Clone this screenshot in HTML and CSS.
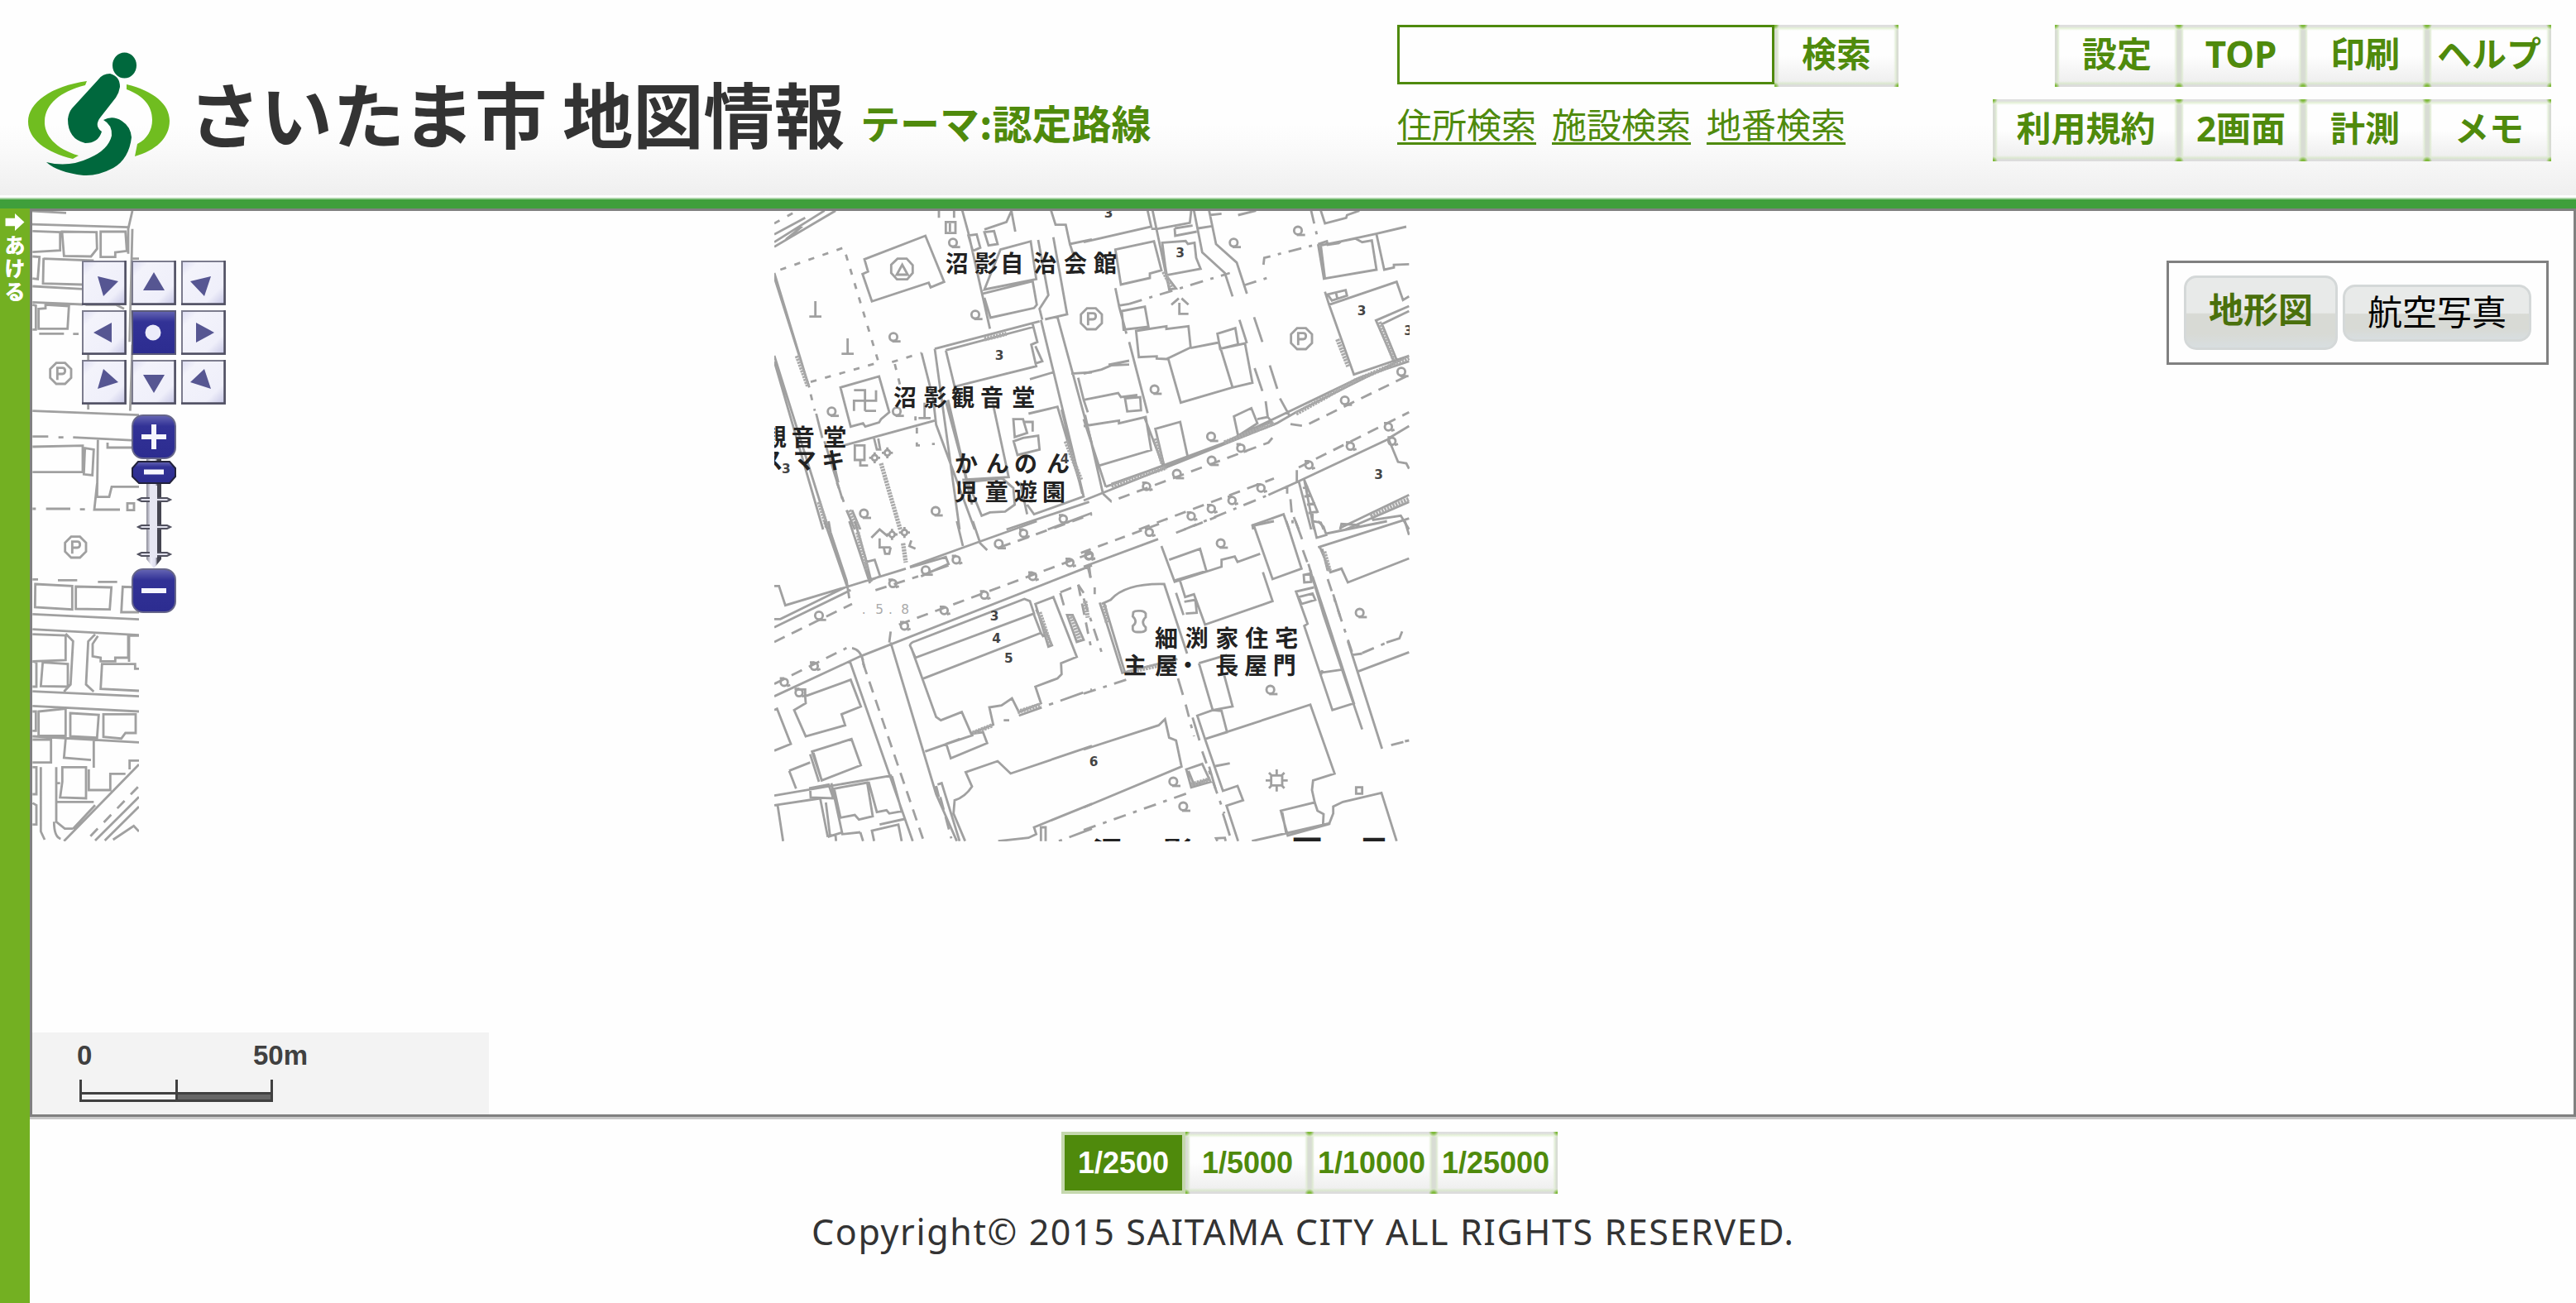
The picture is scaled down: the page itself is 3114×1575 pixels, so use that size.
FILE: index.html
```html
<!DOCTYPE html>
<html lang="ja">
<head>
<meta charset="utf-8">
<title>さいたま市 地図情報</title>
<link rel="stylesheet" href="styles.css">
</head>
<body>
<svg class="defs" width="0" height="0">
  <defs>
    <g id="tree"><circle r="14"/><path d="M-4 16H26"/></g>
    <g id="post"><circle r="13"/><path d="M-16 -14H0M10 14L22 10"/></g>
    <g id="parking"><path d="M-16 -38H16L38 -16V16L16 38H-16L-38 16V-16ZM-12 24V-20H6Q16 -20 16 -9Q16 2 6 2H-12"/></g>
    <g id="grave"><path d="M0 -28V28M-22 28H22"/></g>
    <g id="flower"><circle r="10"/><path d="M0 -20V-10M0 10V20M-20 0H-10M10 0H20"/></g>
  </defs>
</svg>
<header class="header">
  <svg class="logo" viewBox="0 0 1040 240">
    <path fill="#70bd20" d="M105 98C62 104 34 124 34 147C34 168 55 184 88 192L95 188C67 180 53 163 54 146C55 126 72 111 103 103ZM153 102C186 110 205 126 205 146C205 167 188 182 163 189L166 174C178 168 184 157 184 145C184 128 174 116 153 108Z"/>
    <g fill="#00683d">
      <ellipse cx="150.500" cy="79" rx="14.500" ry="15.500"/>
      <path d="M119 96Q124 89 133 89Q145 92 145 105Q144 112 140 118L122 141Q113 152 123 159Q119 173 103 173Q82 168 82 144Q83 136 87 131Z"/>
      <path d="M125 145Q136 139 147 146Q158 153 159 166Q156 192 137 203Q118 213 101 212Q69 208 56 196Q83 203 108 191Q131 181 135 164Q136 151 125 145Z"/>
    </g>
    <g class="logo-text">
      <text x="228" y="173" textLength="433" lengthAdjust="spacingAndGlyphs">さいたま市</text>
      <text x="680" y="173" textLength="341" lengthAdjust="spacingAndGlyphs">地図情報</text>
    </g>
  </svg>
  <h1 class="theme">テーマ:認定路線</h1>
  <div class="search">
    <form class="search-form"><input class="search-input" type="text"><button class="btn" type="button">検索</button></form>
    <div class="search-links"><a href="#">住所検索</a><a href="#">施設検索</a><a href="#">地番検索</a></div>
  </div>
  <nav class="nav">
    <div class="nav-row"><button class="btn">設定</button><button class="btn top">TOP</button><button class="btn">印刷</button><button class="btn">ヘルプ</button></div>
    <div class="nav-row"><button class="btn wide">利用規約</button><button class="btn">2画面</button><button class="btn">計測</button><button class="btn">メモ</button></div>
  </nav>
</header>
<div class="body">
  <aside class="side">
    <svg class="side-arrow" viewBox="0 0 24 22"><path d="M0 6H12V0L24 11L12 22V16H0Z" fill="#fff"/></svg>
    <span>あ</span><span>け</span><span>る</span>
  </aside>
  <main class="main">
    <div class="map">
      <svg class="tile tile-west" viewBox="39 255 129 762">
        <g transform="translate(0 240) scale(.33333)">
          <path d="M110 45L240 52M110 93L465 104M480 45L465 110V200M118 118L218 122V188L118 194M225 120L232 208L330 210L352 182L350 122ZM365 120H455L460 190L418 195V212H365ZM118 210L143 212L137 292L118 290M158 215L156 308L300 312M158 218L340 225M118 318L300 328M118 376L300 384M480 218H510M118 385L130 388V475H118M140 400L165 398V385L250 390L245 472H140ZM310 385H420L450 400M142 490H232M265 491H285M320 560V600M320 740V765M480 110L470 520M480 530L472 770M118 770L504 785M118 863H175M212 866H230M265 866L504 878M118 900L300 896V992H118M308 905L340 910L335 1003L304 1000ZM355 875L352 1082H396L405 1045H504M390 885V903H504M352 1035L342 1128H435M462 1105H486V1130H462ZM118 1125H130M167 1125H255M290 1127H308M118 1381H138M210 1384H280M355 1390H425M128 1398L262 1405V1490L127 1482ZM275 1407L404 1410L398 1490L275 1488ZM504 1410L445 1408L440 1500H504M118 1507L504 1526"/>
          <use href="#parking" x="220" y="634"/><use href="#parking" x="274" y="1264"/>
        </g>
        <g transform="translate(0 700) scale(.33333)">
          <path d="M118 182L504 203M118 200L238 204V294L118 298M238 198L265 225L256 382L232 408M345 200L320 226L312 382L340 408M355 206L336 235V280L365 285V298H418V285H465V205H504M468 206V300M504 325H490V308H370L365 398L504 405M118 298L132 302V390H118M155 302L246 308V390L148 388ZM118 407L504 425M118 460L504 480M118 480H130V550H118M140 480L238 470V568H140ZM255 486L358 492L352 575L255 570ZM375 490L492 490V558H455L440 578L375 572ZM118 570L504 592M118 582H185V665H118M238 580L232 648L330 656M340 585V684M226 682H312V795L218 792L226 735ZM322 690V765H400V706H455M470 690V658H504M504 672L232 950M118 682H132V780H118M148 682V915L162 945M204 682V740H218M204 740V880L235 905H265M205 808H340M118 812L132 820V890H118M196 880Q196 935 220 942M265 905L345 820M345 948L504 790M380 948L504 825M410 945L485 895L504 915"/>
          <path stroke-dasharray="38 32" d="M328 932L504 750"/>
        </g>
      </svg>
      <svg class="tile tile-center" viewBox="936 255 768 762">
        <g transform="translate(930 250) scale(.33333)">
          <path d="M18 145L240 14M18 128L200 14M18 100L130 40M60 118L120 70M345 190L566 105L634 272L585 292L578 275L372 343L338 244L358 235ZM18 240L140 640M18 255L145 655M18 540L215 1170M18 560L195 1170M170 750L192 838M258 655L398 615L435 745L405 770L398 782L348 797L340 785L295 797ZM700 14L722 95L800 442M722 104L752 100L765 148L738 160ZM780 92L815 88L828 135L795 140ZM780 82L860 55L878 15L892 90M838 155L948 125L968 262L780 300ZM775 315L955 270L970 355L960 367L802 402L780 330M975 120L1012 320L980 370L990 410M1030 110L1080 390L1000 408M1022 14L1038 65H1075L1090 135L1170 118M1090 135L1110 195M600 515L980 415M640 520L960 435M600 515L690 1170M640 520L672 652L968 578L950 500L972 490L955 425M985 410L1140 1050M1045 400L1170 860M965 505L990 560L965 568M672 652L860 605M945 625L1030 600M1095 605L1170 600M552 530L585 660M590 660L605 790L745 1170M640 705L700 930L735 1080M648 700L715 985L770 1120L800 1108L855 1105L890 1080L885 1020L845 985L700 1000M260 868L600 775M810 710L868 980L700 990M885 770H920L935 820L890 835ZM940 750L1045 725L1140 1050L960 1115L935 1080M886 850L920 838L975 830L980 880L900 900ZM925 780H955V815M1060 735L1135 1040M910 1000L935 1115M860 1170L1160 1070M1010 1170L1170 1110M1120 620L1140 700L1155 745M200 850L265 1060M225 890L250 1000M280 1100L310 1170M300 1100L330 1170M310 865H345V918H310ZM330 918V938H358M380 840L390 880H402L395 840M600 860H590M640 55H675V95H640ZM655 60V90M615 14V40M670 14V40M530 760V775"/>
          <path stroke-dasharray="22 32" d="M40 228L270 148L395 560M150 635L395 565M445 563L552 530M455 570L475 650M150 680L165 740M535 800V865H560M245 1000L270 1070M18 60L90 20"/>
          <path class="hatch" d="M405 930L475 1170M180 1070L210 1165M290 1100L325 1170M100 540L140 650M780 480L860 460M1075 850L1130 990"/>
          <path d="M442 210L465 188H498L520 212V240L500 263H463L442 240ZM482 210L462 246H502ZM307 665H347V740M347 703H307V740M347 665V703H387V665M347 740H387"/>
          <use href="#grave" x="167" y="370"/><use href="#grave" x="284" y="505"/><use href="#grave" x="563" y="738"/>
          <use href="#tree" x="666" y="130"/><use href="#tree" x="747" y="391"/><use href="#tree" x="450" y="472"/><use href="#tree" x="226" y="742"/><use href="#tree" x="462" y="742"/><use href="#tree" x="343" y="1112"/><use href="#tree" x="603" y="1103"/><use href="#post" x="1066" y="1132"/>
          <use href="#flower" x="382" y="910"/><use href="#flower" x="428" y="892"/>
        </g>
        <g transform="translate(1310 250) scale(.33333)">
          <path d="M0 128L245 72L232 14M250 14L310 298M245 80H268L385 58L390 14M400 14L430 165L512 240L540 325M455 14L480 135L555 202L592 315M330 78L332 105L410 90M330 78L395 68M415 78L465 70M455 30L500 25M560 30L625 14M285 130L370 124L378 135L402 130L408 185L424 225L300 248ZM115 155L255 125L282 230L240 242V258L135 282ZM285 150L310 300L335 296L300 250M115 295L128 358L165 352M138 378L222 362L235 435L145 445ZM128 360L155 460M165 490L232 748M190 450L300 433V443L380 433L388 510L300 552L265 550V542L200 545ZM305 545L352 710L540 655L490 492L388 512M485 460L550 440L560 498L495 515ZM495 515L585 495L612 638L540 655M0 605L65 590L100 575L165 572M90 573L165 558M0 700L125 675L135 690L195 682M150 695L205 690L208 738L158 742ZM0 795L128 775V785L225 762L245 882L50 940M0 770L80 1015M5 755L70 1040M260 805L350 780L378 910L292 940ZM220 762L290 945M545 760L608 730L630 785L560 830ZM630 770L668 762L685 785M660 705L668 765M712 695L745 755M565 410L592 495M618 400L648 490M620 585L648 668M675 575L702 660M860 14L875 60L952 40L955 30L1000 14M850 135L882 125L885 138L925 132L935 125L1060 98L1170 72M860 140L985 115L1010 128L1045 122L1062 228L875 260ZM1062 100L1090 228L1125 220V210L1180 208M875 308L890 355L980 608L1180 540M890 355L1135 272L1158 338L1180 325M885 318L950 302L955 322L900 340ZM915 312L920 332M1180 360L1060 412L1125 560M1180 378L1082 425L1135 555M850 135L872 265M0 1065L700 785L770 745L1180 540M80 1015L540 845L680 780M100 1005L300 935M510 855L1000 620L1180 560M770 1000L1110 840M670 1045L770 1000M1105 840L1180 795M1105 840L1140 925L1170 930L1180 950M800 990L835 1170M780 995L825 1170M795 1020L815 1015M800 1050L825 1045M810 1080L840 1075M815 1110L850 1105M800 990L850 1110M830 1110V1140L860 1145L870 1170M930 1165L1180 1045M950 1170L1180 1070M1040 1110L1050 1135L1150 1120L1180 1170M773 955V995M738 1010V1040M615 1170L612 1155L725 1115L745 1170M762 1125L780 1170"/>
          <path stroke-dasharray="48 28 12 28" d="M165 352L530 240M580 285L690 250M652 210L655 185L850 135M825 14L850 120M365 1170L670 1045M750 1060L760 1170"/>
          <path stroke-dasharray="42 28" d="M70 1040L100 1068L670 855L695 825M750 788L800 795L1180 610M200 1170L690 985M780 945L1180 745"/>
          <path class="hatch" d="M100 1012L300 945M510 855L690 785M770 750L985 630L1180 548M920 480L960 580M1072 418L1125 555M1040 1120L1180 1060M260 840L285 930M290 235L320 295"/>
          <path d="M318 355L345 332M355 332L380 355M347 348V388H380"/>
          <use href="#parking" x="28" y="406"/><use href="#parking" x="790" y="478"/>
          <use href="#tree" x="544" y="130"/><use href="#tree" x="777" y="86"/><use href="#tree" x="257" y="662"/><use href="#tree" x="462" y="833"/><use href="#post" x="570" y="875"/><use href="#tree" x="464" y="920"/><use href="#tree" x="338" y="968"/><use href="#post" x="228" y="1014"/><use href="#tree" x="947" y="702"/><use href="#tree" x="1152" y="598"/><use href="#post" x="1105" y="798"/><use href="#post" x="967" y="868"/><use href="#post" x="817" y="936"/><use href="#post" x="643" y="1020"/><use href="#post" x="538" y="1065"/><use href="#post" x="463" y="1095"/><use href="#post" x="390" y="1122"/><use href="#post" x="1118" y="850"/>
        </g>
        <g transform="translate(930 630) scale(.33333)">
          <path d="M200 0L285 245M215 0L222 40L280 215L290 280M290 0L365 225M310 0L348 130L370 220M350 148L382 140L402 200L365 215ZM18 235H35L58 305L275 240M18 355H40L275 240L495 172M18 385L295 250M510 165L760 75L970 0M680 0L702 90M738 0L765 80L790 105M510 168L640 130L650 155L550 200M580 185L650 160M18 635L330 490L1170 160M300 460Q330 465 340 505M440 400L435 440M292 508L520 1160M335 490L345 530M440 440L605 990L680 1160M565 835L642 808M18 685L28 680L78 808L18 832M130 635L295 575L332 672L262 700L275 740L132 780L90 685L132 660ZM92 610H130V632M155 835L298 790L332 885L190 940ZM72 905L148 875M72 905L97 970M148 845L180 945M160 840L190 940M18 995L445 922M18 1030L185 1005M30 1030L50 1160M148 968L215 955L232 1005L150 1002ZM185 1008L212 1145M225 950L265 1135L330 1128M235 970L355 948L375 1070L325 1082L310 1065L258 1075ZM360 945L390 1055L425 1048L435 1060L480 1052L445 925M205 1020L220 1140L240 1138L242 1160M330 1128L340 1160M212 1145L260 1130M380 1160L372 1122L468 1100L480 1160M400 1100L490 1080M510 450Q512 440 530 435L925 282L945 290L960 335L530 495ZM515 460L605 710L622 722L698 692L732 770L812 738L798 675L842 668L880 642L905 692L985 660L965 600L1045 570L1060 555L1058 515L1115 492L1030 275L965 300L1012 455L1025 450L968 320M960 340L985 405L555 572M985 405L995 420M740 770L775 765L790 805L658 860L642 808L740 775M1055 260L1068 305M1055 258L1095 242M1080 340H1100L1140 430L1115 438ZM1155 165L1165 205M1120 230L1140 260M1170 815L875 915L828 870L712 910L735 962Q710 1000 672 1012L668 1060L710 1160M610 955L625 950L690 1160M605 960L615 1000M1170 1025L960 1110L968 1135L940 1148L830 1160M985 1160V1110H1002V1160M640 808L690 790"/>
          <path stroke-dasharray="42 28" d="M18 438L300 300M18 590L280 460M385 250L540 200M470 375L1170 115M835 95L1170 -25M340 515L560 1160M1120 230L1165 450"/>
          <path stroke-dasharray="88 28 16 28" d="M905 705L1170 610M1170 1115L1050 1160M850 722H870"/>
          <path stroke-dasharray="48 26" d="M620 1000L660 1150"/>
          <path class="hatch" d="M485 80L495 150M738 768L810 740M900 692L985 665M1095 345L1125 430M980 330L1020 450M320 40L355 180"/>
          <path d="M370 60L400 30L430 55M400 62V95H440M415 95L420 118H435L440 95M515 70L508 90L530 100"/>
          <use href="#flower" x="445" y="48"/><use href="#flower" x="490" y="41"/>
          <use href="#tree" x="180" y="342"/><use href="#post" x="448" y="226"/><use href="#tree" x="832" y="82"/><use href="#post" x="922" y="44"/><use href="#post" x="678" y="140"/><use href="#tree" x="567" y="178"/><use href="#post" x="490" y="380"/><use href="#post" x="634" y="324"/><use href="#post" x="780" y="268"/><use href="#post" x="955" y="200"/><use href="#post" x="1090" y="150"/><use href="#post" x="1158" y="126"/><use href="#post" x="54" y="584"/><use href="#post" x="163" y="526"/><use href="#post" x="108" y="622"/>
        </g>
        <g transform="translate(1310 630) scale(.33333)">
          <path d="M0 165L270 65M282 90L330 220L500 165V140L548 128L558 148L640 118M310 140L422 100L445 180L330 215M620 15L690 0M615 10L685 210L790 172L735 0M768 0L792 65M650 185L685 290L440 375L400 265L368 275L350 218M65 300L98 285Q150 225 292 228L375 480M75 300L150 550M58 295L85 375L140 550L340 500M335 260L362 340M365 292L405 285L410 332L370 335M342 570L360 630M395 712L420 795M418 515L520 485M418 515L468 685L540 672L510 560M468 685L500 688L520 765L440 790L412 705L468 685M440 790L822 665L910 915L832 940L828 975L838 1020L715 1050L740 1140L890 1098L905 1060V1035L940 1018L1080 985L1135 1160M440 790L505 978L558 960L578 1012L518 1032L560 1160M478 888L530 878M838 1020L848 1050L870 1062L868 1100M720 1055L735 1135M610 1160L895 1095M0 828L272 740L295 718L310 785L335 795L355 890L0 1038M372 900L430 880L460 945L390 965ZM455 890L478 970M380 905L400 955L455 935M505 1060L530 1140M830 0L845 60L880 50L870 20L850 0M880 45L1100 0M850 95L1180 -10M855 90L895 185L935 172L958 222L1180 135M865 100L885 180M1165 0L1180 50M930 30L935 10L1000 14M815 155L870 340L1010 755M830 200L880 350L980 660L902 685L800 380L812 372L770 255L835 240M798 195L822 190L825 220L800 222ZM780 275L830 262L840 285L790 300ZM855 550L938 538M860 560L865 540M905 265L930 345M958 435L1082 825M995 545L1180 475M975 485L1010 480M1098 440L1145 425L1155 400M988 965H1010V988H988ZM1180 795L1165 798M485 1160L480 1150L512 1148L515 1160M20 165L25 205M180 330Q185 325 198 325H205Q220 325 225 335V348Q205 365 225 385V395Q220 402 205 402H195Q180 402 178 392V380Q198 365 178 345Z"/>
          <path stroke-dasharray="46 28 14 28" d="M0 625L170 570M370 665L400 780M430 835L510 1060M0 1120L380 985M795 105L830 200M885 210L975 480M1010 478L1100 440M1115 812L1180 795M0 280L70 490M40 240V265"/>
          <path stroke-dasharray="38 28" d="M-10 115L300 0M335 42L480 -15"/>
          <path class="hatch" d="M160 548L335 508M75 305L85 370M390 955L460 935M872 110L892 180M5 290L15 350"/>
          <path d="M680 922H720V958H680ZM700 900V918M700 960V980M660 940H678M722 940H740M672 912L680 920M728 912L720 920M672 968L680 960M728 968L720 960"/>
          <use href="#tree" x="497" y="80"/><use href="#tree" x="1001" y="332"/><use href="#tree" x="677" y="611"/><use href="#tree" x="325" y="944"/><use href="#tree" x="361" y="1034"/><use href="#post" x="238" y="40"/><use href="#post" x="20" y="124"/>
        </g>
        <g class="map-label" transform="translate(930 250) scale(.33333)">
          <text y="237" x="638 744 838 958 1068 1176">沼影自治会館</text>
          <text y="723" x="450 560 660 765 880">沼影観音堂</text>
          <text y="866" x="-22 80 196">観音堂</text>
          <text y="952" x="-34 86 190">スマキ</text>
          <text y="964" x="672 785 888 1005">かんのん</text>
          <text y="1066" x="672 782 888 990">児童遊園</text>
          <text y="1596" x="1398 1508 1618 1726 1834">細渕家住宅</text>
          <text y="1696" x="1284 1398 1476 1618 1722 1826">主屋・長屋門</text>
          <text y="2382 2382 2374 2377" x="1170 1425 1895 2138" class="district">沼影丁目</text>
        </g>
        <g class="map-num" transform="translate(930 250) scale(.33333)">
          <text x="818" y="554">3</text><text x="1214" y="38">3</text><text x="1474" y="184">3</text><text x="2132" y="392">3</text><text x="2302" y="464">3</text><text x="2194" y="986">3</text><text x="45" y="966">3</text><text x="1055" y="930">4</text><text x="800" y="1500">3</text><text x="808" y="1580">4</text><text x="852" y="1652">5</text><text x="1160" y="2028">6</text>
          <text class="faint" x="335 385 432 478" y="1476">.5.8</text>
        </g>
      </svg>
      <svg class="control" viewBox="99 315 174 426">
        <defs>
          <linearGradient id="face" x2="1" y2="1"><stop offset="0" stop-color="#dcdcf2"/><stop offset=".2" stop-color="#f3f3fb"/><stop offset=".75" stop-color="#efeffa"/><stop offset="1" stop-color="#c4c4e4"/></linearGradient>
          <linearGradient id="navy" x2="0" y2="1"><stop offset="0" stop-color="#6666b4"/><stop offset=".25" stop-color="#323296"/><stop offset="1" stop-color="#2c2c90"/></linearGradient>
          <linearGradient id="rail"><stop offset="0" stop-color="#8a8a96"/><stop offset=".3" stop-color="#eeeefa"/><stop offset=".6" stop-color="#dcdcec"/><stop offset=".75" stop-color="#444450"/><stop offset="1" stop-color="#444450"/></linearGradient>
          <g id="key"><rect x="1" y="1" width="52" height="52" fill="url(#face)" stroke="#7c7c8e" stroke-width="2"/><path d="M52.500 0V52.500H0" fill="none" stroke="#515164" stroke-width="2.500"/></g>
        </defs>
        <use href="#key" x="99" y="315"/><use href="#key" x="159" y="315"/><use href="#key" x="219" y="315"/>
        <use href="#key" x="99" y="375"/><use href="#key" x="219" y="375"/>
        <use href="#key" x="99" y="435"/><use href="#key" x="159" y="435"/><use href="#key" x="219" y="435"/>
        <rect x="160" y="376" width="52" height="52" fill="url(#navy)" stroke="#5a5a78" stroke-width="2"/>
        <circle cx="185" cy="402" r="9.500" fill="#ececfa"/>
        <path fill="#565692" d="M118 334L143 340L125 358ZM186 329L199 351H173ZM255 334L230 340L247 358ZM113 402L135 390V414ZM259 402L237 390V414ZM125 446L143 462L118 470ZM186 475L199 453H173ZM247 446L230 462L255 470Z"/>
        <path fill="url(#rail)" d="M177 550H195V676L186 687L177 676Z"/>
        <path fill="#e0e0ec" stroke="#50505e" stroke-width="2" d="M167 604L171 602H202L206 604L202 606H171ZM167 637L171 635H202L206 637L202 639H171ZM167 670L171 668H202L206 670L202 672H171Z"/>
        <path fill="#e6e6f2" d="M181 587H190V674H181Z"/>
        <rect x="160" y="502" width="52" height="52" rx="13" fill="url(#navy)" stroke="#66668a" stroke-width="2"/>
        <path d="M167 558H205L212 566V576L205 584H168L160 576V566Z" fill="url(#navy)" stroke="#22223c" stroke-width="2"/>
        <rect x="160" y="688" width="52" height="52" rx="13" fill="url(#navy)" stroke="#66668a" stroke-width="2"/>
        <path d="M171 528H201M186 513V543M174 570.500H198M171 714H201" stroke="#f6f6fe" stroke-width="6"/>
      </svg>
      <div class="layers"><button class="layer active">地形図</button><button class="layer">航空写真</button></div>
      <div class="scale">
        <div class="scale-labels"><span>0</span><span>50m</span></div>
        <svg class="scale-bar" viewBox="0 0 234 27"><path d="M117 16H233V26H117Z" fill="#666"/><path d="M1.500 0V25.500H232.500V0M117.500 0V25M0 16.500H233" fill="none" stroke="#404040" stroke-width="3"/></svg>
      </div>
    </div>
    <div class="scales"><button class="btn on">1/2500</button><button class="btn">1/5000</button><button class="btn">1/10000</button><button class="btn">1/25000</button></div>
    <footer class="copy">Copyright© 2015 SAITAMA CITY ALL RIGHTS RESERVED.</footer>
  </main>
</div>
</body>
</html>
```
FILE: styles.css
```css
* { box-sizing: border-box; }
body {
  margin: 0;
  width: 3114px;
  height: 1575px;
  overflow: hidden;
  background: #fefefe;
  color: #333;
  font-family: "Noto Sans", "Noto Sans CJK JP", sans-serif;
}
.defs { display: block; height: 0; }
button { font: inherit; padding: 0; margin: 0; border: 0; }

.header {
  display: flex;
  height: 252px;
  background: linear-gradient(#fefefe 0 150px, #fafafa 180px, #efefef 236px, #fefefe 236px 239px, #a5d2a2 239px 241px, #3f9f3b 241px);
}
.logo { width: 1040px; height: 240px; flex: none; }
.logo-text {
  fill: #333;
  font: bold 86px "Noto Sans CJK JP", sans-serif;
}
.theme {
  margin: 111px 0 0;
  width: 649px;
  flex: none;
  color: #4f8a0c;
  font: bold 48px/72px "Noto Sans CJK JP", sans-serif;
}
.search { width: 606px; flex: none; padding-top: 30px; }
.search-form { display: flex; align-items: flex-start; margin: 0; }
.search-input {
  width: 457px;
  height: 72px;
  padding: 0;
  border: 3px solid #4f8a0c;
  background: #fefefe;
}
.search-links { display: flex; gap: 19px; margin-top: 17px; }
.search-links a {
  color: #4f8a0c;
  font: 42px/54px "Noto Sans CJK JP", sans-serif;
  text-decoration-thickness: 3px;
  text-underline-offset: 5px;
}
.nav {
  display: flex;
  flex-direction: column;
  align-items: flex-end;
  gap: 15px;
  margin-left: auto;
  padding: 30px 30px 0 0;
}
.nav-row { display: flex; }
.btn {
  width: 150px;
  height: 75px;
  flex: none;
  color: #4f8a0c;
  font-size: 42px;
  font-weight: bold;
  line-height: 70px;
  padding-bottom: 5px;
  white-space: nowrap;
  background:
    radial-gradient(circle at 0 0, #7fba3c 2px, transparent 6px),
    radial-gradient(circle at 100% 0, #7fba3c 2px, transparent 6px),
    radial-gradient(circle at 0 100%, #7fba3c 2px, transparent 6px),
    radial-gradient(circle at 100% 100%, #7fba3c 2px, transparent 6px),
    linear-gradient(#dedede 2px, #e4f1d6 4px, transparent 7px),
    linear-gradient(to top, #dcdcdc 2px, #dbe8cf 4px, transparent 7px),
    linear-gradient(to right, #d8dcd4 2px, #e0ecd4 4px, transparent 6px),
    linear-gradient(to left, #d8dcd4 2px, #e0ecd4 3px, transparent 6px),
    linear-gradient(#fefefe 50%, #ececec);
}
.btn.wide { width: 225px; }
.btn.top { font-size: 44px; }

.body { display: flex; height: 1323px; }
.side {
  width: 36px;
  flex: none;
  display: flex;
  flex-direction: column;
  align-items: center;
  padding-top: 6px;
  background: #73b022;
  color: #fff;
  font: 900 25px/28px "Noto Sans CJK JP", sans-serif;
}
.side-arrow { width: 24px; height: 21px; margin-bottom: 2px; }
.main { flex: 1; }
.map {
  position: relative;
  height: 1098px;
  border: 3px solid #808080;
  box-shadow: 0 3px #c8c8c8;
}
.tile {
  position: absolute;
  top: 0;
  height: 762px;
  overflow: hidden;
  fill: none;
  stroke: #a0a0a0;
  stroke-width: 8.5;
}
.tile-west { left: 0; width: 129px; }
.tile-center { left: 897px; width: 768px; }
.hatch { stroke-width: 16; stroke: #aaa; stroke-dasharray: 8 3; }
.map-label {
  fill: #222;
  stroke: none;
  font: bold 84px "Noto Sans CJK JP", sans-serif;
}
.district { font-size: 110px; }
.map-num { fill: #444; stroke: none; font: bold 46px "DejaVu Sans", sans-serif; }
.faint { fill: #aaa; font-weight: normal; }
.control { position: absolute; left: 60px; top: 60px; width: 174px; height: 426px; }
.layers {
  position: absolute;
  right: 30px;
  top: 60px;
  width: 462px;
  height: 126px;
  display: flex;
  align-items: center;
  gap: 6px;
  padding-left: 18px;
  border: 3px solid #808080;
}
.layer {
  width: 228px;
  height: 69px;
  border: 3px solid #d4d8d8;
  border-radius: 15px;
  color: #000;
  font-size: 42px;
  line-height: 58px;
  padding-bottom: 2px;
  background: linear-gradient(#e8eae9 50%, #d8dad5 52% 80%, #d8dee0);
}
.layer.active { width: 186px; height: 90px; color: #4a700c; font-weight: bold; line-height: 76px; padding-bottom: 8px; }
.scale {
  position: absolute;
  left: 0;
  bottom: 0;
  width: 552px;
  height: 99px;
  padding: 9px 0 0 54px;
  background: #f3f3f3;
  color: #404040;
  font: bold 33px/38px "Liberation Sans", sans-serif;
}
.scale-labels { display: flex; justify-content: space-between; width: 279px; }
.scale-bar { display: block; width: 234px; height: 27px; margin: 10px 0 0 3px; }
.scales { display: flex; padding: 18px 0 0 1247px; }
.scales .btn { font: bold 36px/72px "Liberation Sans", sans-serif; padding: 0 0 0; }
.scales .on {
  color: #fefefe;
  background: #4f8a0c;
  border: 4px solid #c5d8ae;
  line-height: 64px;
}
.copy {
  margin-top: 16px;
  padding-left: 945px;
  color: #333;
  font-size: 43px;
  line-height: 60px;
  letter-spacing: 1.6px;
  white-space: nowrap;
}
```
